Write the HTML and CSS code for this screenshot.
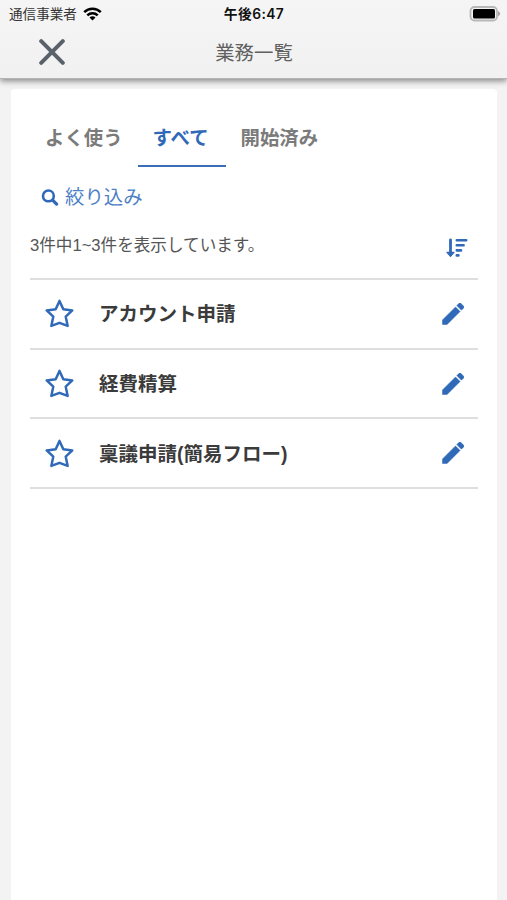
FILE: index.html
```html
<!DOCTYPE html>
<html lang="ja">

<head>
  <meta charset="utf-8">
  <meta name="viewport" content="width=device-width, initial-scale=1">
  <title>業務一覧</title>
  <link rel="stylesheet" href="styles.css">
</head>

<body>
  <svg width="0" height="0" class="defs">
    <symbol id="star" viewBox="0 0 30 30">
      <path d="M15 2.8 L18.7 10.9 L27.4 12 L21 18 L22.9 27 L15 24 L7.1 27 L9 18 L2.6 12 L11.3 10.9 Z" fill="none" stroke="currentColor" stroke-width="2.4" stroke-linejoin="round" />
    </symbol>
    <symbol id="pencil" viewBox="3 3 18 18">
      <path d="M3.4 16.85V20.6H7.15L17.81 9.94l-3.75-3.75L3.4 16.85zM20.71 7.04c.39-.39.39-1.02 0-1.41l-2.34-2.34c-.39-.39-1.02-.39-1.41 0l-1.83 1.83 3.75 3.75 1.83-1.83z" fill="currentColor" stroke="currentColor" stroke-width=".4" stroke-linejoin="round" />
    </symbol>
  </svg>
  <header class="header">
    <div class="status">
      <div class="carrier">
        <span>通信事業者</span>
        <svg class="wifi" width="19" height="14" viewBox="0 0 19 14">
          <path d="M1.2 5.2 C5.8 .6 13.2 .6 17.8 5.2 M4.3 8.3 C7.2 5.5 11.8 5.5 14.7 8.3" fill="none" stroke="#000" stroke-width="2.5" />
          <path d="M6.5 10.4 C8.2 8.8 10.8 8.8 12.5 10.4 L9.5 13.4 Z" fill="#000" />
        </svg>
      </div>
      <div class="time">午後6:47</div>
      <div class="battery">
        <svg width="32" height="16" viewBox="0 0 32 16">
          <rect x="1.5" y="1" width="26.5" height="13.5" rx="4" fill="#f3f3f3" stroke="#b8b8b8" stroke-width="1.8" />
          <rect x="4" y="3" width="22" height="9.5" rx="1.5" fill="#000" />
          <path d="M29 5 Q33.5 7.7 29 10.4 Z" fill="#a8a8a8" />
        </svg>
      </div>
    </div>
    <div class="titlebar">
      <svg class="close" width="26" height="26" viewBox="0 0 26 26">
        <path d="M2.2 2.2 L23.8 23.8 M23.8 2.2 L2.2 23.8" stroke="#59616a" stroke-width="4" stroke-linecap="round" />
      </svg>
      <h1>業務一覧</h1>
    </div>
  </header>
  <main class="card">
    <nav class="tabs">
      <div class="tab">よく使う</div>
      <div class="tab active">すべて</div>
      <div class="tab">開始済み</div>
    </nav>
    <div class="filter">
      <svg width="18" height="18" viewBox="0 0 18 18">
        <circle cx="7.4" cy="7.9" r="5.4" fill="none" stroke="currentColor" stroke-width="2.6" />
        <path d="M11.6 12.1 L15.6 16.1" stroke="currentColor" stroke-width="3.2" stroke-linecap="round" />
      </svg>
      <span>絞り込み</span>
    </div>
    <div class="summary">
      <p>3件中1~3件を表示しています。</p>
      <svg class="sort" width="22" height="20" viewBox="0 0 22 20">
        <path d="M4.5 2 V16" stroke="currentColor" stroke-width="2.8" stroke-linecap="round" />
        <path d="M1 14.3 H8 L4.5 18.4 Z" fill="currentColor" stroke="currentColor" stroke-width="1.2" stroke-linejoin="round" />
        <path d="M10.8 2.2 H20.2 M10.8 7.3 H17.6 M10.8 12.4 H15 M10.8 17.4 H12.4" stroke="currentColor" stroke-width="2.6" stroke-linecap="round" />
      </svg>
    </div>
    <ul class="list">
      <li>
        <svg class="star"><use href="#star" /></svg>
        <span class="name">アカウント申請</span>
        <svg class="edit"><use href="#pencil" /></svg>
      </li>
      <li>
        <svg class="star"><use href="#star" /></svg>
        <span class="name">経費精算</span>
        <svg class="edit"><use href="#pencil" /></svg>
      </li>
      <li>
        <svg class="star"><use href="#star" /></svg>
        <span class="name">稟議申請(簡易フロー)</span>
        <svg class="edit"><use href="#pencil" /></svg>
      </li>
    </ul>
  </main>
</body>

</html>
```
FILE: styles.css
```css
* {
  box-sizing: border-box;
}

body {
  margin: 0;
  height: 100vh;
  display: flex;
  flex-direction: column;
  overflow: hidden;
  background-color: #f3f3f3;
  font-family: "Liberation Sans", "Noto Sans CJK JP", sans-serif;
  color: #444;
}

svg {
  display: block;
  flex: none;
}

.defs {
  position: absolute;
}

.header {
  height: 79px;
  flex: none;
  background: linear-gradient(#f5f5f5, #f1f1f1);
  border-bottom: 1px solid #b4b4b4;
  box-shadow: 0 2px 6px rgba(0, 0, 0, 0.45);
}

.status {
  height: 27px;
  padding: 0 6px 0 9px;
  display: grid;
  grid-template-columns: 1fr auto 1fr;
  align-items: center;
}

.carrier {
  display: flex;
  align-items: center;
  gap: 6px;
  font-size: 13.6px;
  color: #333;
}

.carrier span {
  padding-bottom: 2px;
}

.time {
  padding: 0 2px 2px 0;
  font-family: Inter, "Noto Sans CJK JP", sans-serif;
  font-size: 13.8px;
  font-weight: 600;
  letter-spacing: 0.4px;
  color: #111;
}

.battery {
  justify-self: end;
}

.titlebar {
  height: 50px;
  padding: 0 38px 0 39px;
  display: grid;
  grid-template-columns: 1fr auto 1fr;
  align-items: center;
}

h1 {
  margin: 0;
  padding-bottom: 2px;
  font-size: 19.4px;
  font-weight: 400;
  color: #606060;
}

.card {
  flex: 1;
  margin: 10px 10px 0 11px;
  padding: 19px 19px 0;
  background-color: #fff;
  border-radius: 4px 4px 0 0;
}

.tabs {
  display: flex;
  height: 59px;
}

.tab {
  padding: 0 15px;
  line-height: 60px;
  font-size: 19.4px;
  font-weight: 700;
  color: #7b7b7b;
}

.active {
  min-width: 88px;
  color: #2f69b8;
  border-bottom: 2px solid #3a6fb8;
}

.filter {
  display: flex;
  align-items: center;
  gap: 6px;
  height: 60px;
  padding-left: 11px;
  font-size: 19.4px;
  color: #2f69b8;
}

.filter span {
  padding-bottom: 3px;
  color: #4d80c5;
}

.summary {
  display: flex;
  justify-content: space-between;
  height: 51px;
  padding-right: 10px;
  color: #2f69b8;
}

.summary p {
  margin: 6px 0 0;
  font-size: 16.6px;
  line-height: 26px;
  color: #555;
}

.sort {
  margin-top: 11px;
}

.list {
  margin: 0;
  padding: 0;
  list-style: none;
  border-top: 2px solid #dedede;
}

.list li {
  display: flex;
  align-items: center;
  height: 69.7px;
  padding: 0 14px;
  border-bottom: 2px solid #dedede;
  color: #2f69b8;
}

.star {
  width: 31px;
  height: 31px;
}

.name {
  flex: 1;
  padding: 0 0 2px 24px;
  font-size: 19.5px;
  font-weight: 700;
  color: #3b3b3b;
}

.edit {
  width: 22px;
  height: 22px;
}
```
